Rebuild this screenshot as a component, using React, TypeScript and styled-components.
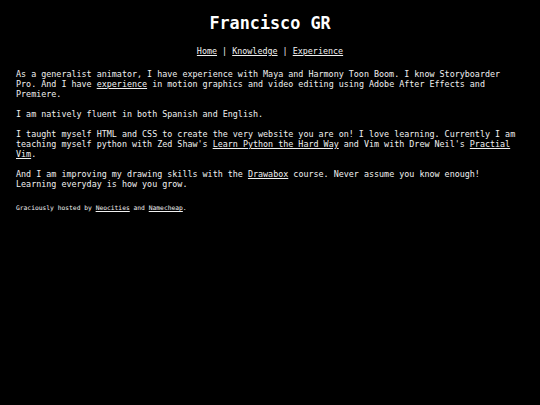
import React from "react";
import styled, { createGlobalStyle } from "styled-components";

const GlobalStyle = createGlobalStyle`
  html, body {
    margin: 0;
    padding: 0;
    background: #000;
  }
  body {
    color: #f0f0f0;
    font-family: "DejaVu Sans Mono", "Liberation Mono", monospace;
    font-size: 8.4px;
  }
`;

const Page = styled.div`
  min-height: 405px;
  padding: 0 16px;
  background: #000;
`;

const Title = styled.h1`
  margin: 13px 0 0;
  font-size: 16.8px;
  line-height: 20px;
  font-weight: bold;
  text-align: center;
  color: #fff;
`;

const Nav = styled.nav`
  margin-top: 13px;
  line-height: 10px;
  text-align: center;
`;

const Link = styled.a`
  color: #f0f0f0;
  text-decoration: underline;
`;

const Content = styled.main`
  margin-top: 13px;
`;

const Para = styled.p`
  margin: 0 0 10px;
  line-height: 10px;
`;

const Footer = styled.footer`
  margin-top: 15px;
  font-size: 6.3px;
  line-height: 8px;
`;

export default function App() {
  return (
    <>
      <GlobalStyle />
      <Page>
        <Title>Francisco GR</Title>
        <Nav>
          <Link href="#">Home</Link> | <Link href="#">Knowledge</Link> |{" "}
          <Link href="#">Experience</Link>
        </Nav>
        <Content>
          <Para>
            As a generalist animator, I have experience with Maya and Harmony
            Toon Boom. I know Storyboarder Pro. And I have{" "}
            <Link href="#">experience</Link> in motion graphics and video
            editing using Adobe After Effects and Premiere.
          </Para>
          <Para>I am natively fluent in both Spanish and English.</Para>
          <Para>
            I taught myself HTML and CSS to create the very website you are on!
            I love learning. Currently I am teaching myself python with Zed
            Shaw's <Link href="#">Learn Python the Hard Way</Link> and Vim with
            Drew Neil's <Link href="#">Practial Vim</Link>.
          </Para>
          <Para>
            And I am improving my drawing skills with the{" "}
            <Link href="#">Drawabox</Link> course. Never assume you know
            enough! Learning everyday is how you grow.
          </Para>
        </Content>
        <Footer>
          Graciously hosted by <Link href="#">Neocities</Link> and{" "}
          <Link href="#">Namecheap</Link>.
        </Footer>
      </Page>
    </>
  );
}
